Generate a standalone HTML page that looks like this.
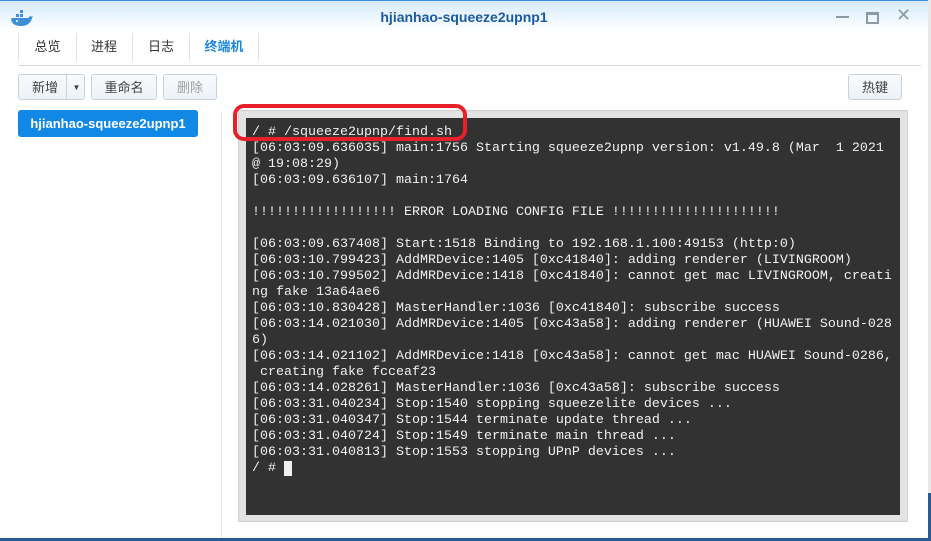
<!DOCTYPE html><html><head><meta charset="utf-8"><style>
body{margin:0;width:931px;height:541px;overflow:hidden;background:#2b5a92;font-family:"Liberation Sans","Noto Sans CJK SC",sans-serif;position:relative}
.win{position:absolute;left:0;top:0;width:928px;height:537px;background:#fff;border-top:1px solid #3a8ee6}
.right{position:absolute;left:928px;top:0;width:3px;height:493px;background:#e8e8e8}
.title{height:30px;background:linear-gradient(#d6ebfb,#fff);text-align:center;font-size:14px;font-weight:bold;color:#1a5aa0;line-height:33px}
.tabs{position:absolute;left:18px;top:32px;width:903px;height:32px;border-bottom:1px solid #d6d9dd}
.tab{position:absolute;top:0;height:28px;line-height:28px;font-size:13px;color:#333;text-align:center;border-right:1px solid #e2e4e6}
.btn{position:absolute;top:73px;height:26px;border:1px solid #c8d2dc;border-radius:3px;background:linear-gradient(#f9fbfd,#edf2f7);font-size:13px;color:#404040;line-height:26px;text-align:center;box-sizing:border-box}
.term{position:absolute;left:238px;top:109px;width:670px;height:412px;background:#e3e3e3;border:1px solid #cfcfcf;box-sizing:border-box}
.dark{position:absolute;left:246px;top:117px;width:654px;height:397px;background:#323232}
pre{margin:0;position:absolute;left:252px;top:124px;font-family:"Liberation Mono",monospace;font-size:13.33px;line-height:16px;color:#f0f0f0;white-space:pre}
</style></head><body>
<div class="win">
<div class="title">hjianhao-squeeze2upnp1</div>
<svg style="position:absolute;left:10px;top:9px" width="24" height="18" viewBox="0 0 24 18"><path d="M1 9 Q2 16 11 16 Q20 16 22 8 L23 6 Q21 7 20 6 Q19 8 17 8 L2 8 Z" fill="#3d8fd8"/><rect x="6" y="4" width="3" height="3" fill="#3d8fd8"/><rect x="10" y="4" width="3" height="3" fill="#3d8fd8"/><rect x="10" y="0" width="3" height="3" fill="#3d8fd8"/><circle cx="7" cy="11" r="1" fill="#fff"/></svg>
<div style="position:absolute;left:836px;top:15px;width:13px;height:2px;background:#8a9aa8"></div>
<div style="position:absolute;left:866px;top:11px;width:9px;height:7px;border:2px solid #8a9aa8;border-top-width:3px"></div>
<div style="position:absolute;left:896px;top:4px;font-size:18px;color:#8a9aa8">✕</div>
<div class="tabs">
<div class="tab" style="left:0;width:57px;border-left:1px solid #e2e4e6">总览</div>
<div class="tab" style="left:58px;width:56px">进程</div>
<div class="tab" style="left:115px;width:56px">日志</div>
<div class="tab" style="left:172px;width:68px;color:#1a86e0;font-weight:bold">终端机</div>
</div>
<div class="btn" style="left:18px;width:67px;text-align:left;padding-left:13px">新增<span style="position:absolute;left:47px;top:0;height:24px;border-left:1px solid #c8d2dc;width:19px;text-align:center;font-size:8px">▼</span></div>
<div class="btn" style="left:91px;width:66px">重命名</div>
<div class="btn" style="left:163px;width:54px;color:#a0a0a0">删除</div>
<div class="btn" style="left:848px;width:54px">热键</div>
<div style="position:absolute;left:18px;top:109px;width:180px;height:27px;background:#1187e6;border-radius:3px;color:#fff;font-size:13px;font-weight:bold;line-height:27px;text-align:center">hjianhao-squeeze2upnp1</div>
<div style="position:absolute;left:221px;top:110px;width:1px;height:427px;background:#e6e6e6"></div>
<div class="term"></div><div class="dark"></div>
<pre>/ # /squeeze2upnp/find.sh
[06:03:09.636035] main:1756 Starting squeeze2upnp version: v1.49.8 (Mar  1 2021
@ 19:08:29)
[06:03:09.636107] main:1764

!!!!!!!!!!!!!!!!!! ERROR LOADING CONFIG FILE !!!!!!!!!!!!!!!!!!!!!

[06:03:09.637408] Start:1518 Binding to 192.168.1.100:49153 (http:0)
[06:03:10.799423] AddMRDevice:1405 [0xc41840]: adding renderer (LIVINGROOM)
[06:03:10.799502] AddMRDevice:1418 [0xc41840]: cannot get mac LIVINGROOM, creati
ng fake 13a64ae6
[06:03:10.830428] MasterHandler:1036 [0xc41840]: subscribe success
[06:03:14.021030] AddMRDevice:1405 [0xc43a58]: adding renderer (HUAWEI Sound-028
6)
[06:03:14.021102] AddMRDevice:1418 [0xc43a58]: cannot get mac HUAWEI Sound-0286,
 creating fake fcceaf23
[06:03:14.028261] MasterHandler:1036 [0xc43a58]: subscribe success
[06:03:31.040234] Stop:1540 stopping squeezelite devices ...
[06:03:31.040347] Stop:1544 terminate update thread ...
[06:03:31.040724] Stop:1549 terminate main thread ...
[06:03:31.040813] Stop:1553 stopping UPnP devices ...
/ # <span style="background:#f0f0f0">&nbsp;</span></pre>
<div style="position:absolute;left:233px;top:103px;width:234px;height:37px;border:4px solid #e8202a;border-radius:11px;box-sizing:border-box"></div>
</div>
<div class="right"></div>
</body></html>
